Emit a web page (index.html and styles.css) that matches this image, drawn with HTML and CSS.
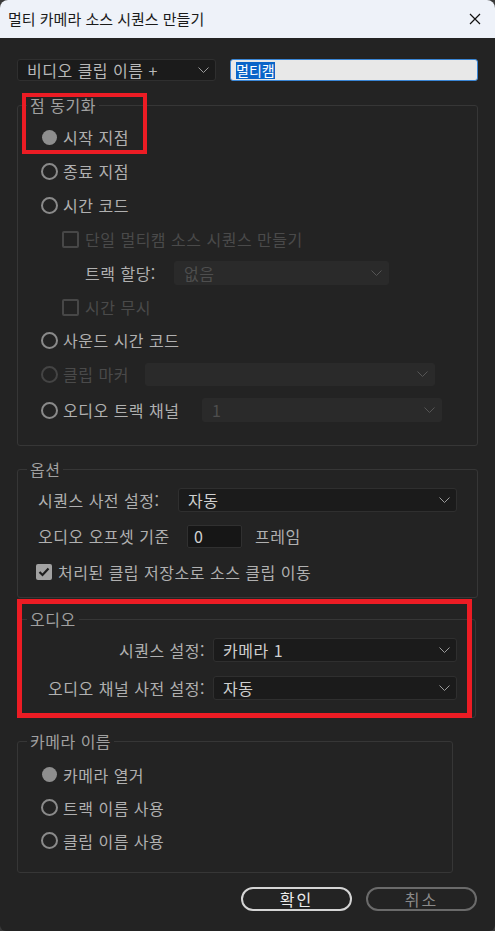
FILE: index.html
```html
<!DOCTYPE html>
<html lang="ko">
<head>
<meta charset="utf-8">
<title>멀티 카메라 소스 시퀀스 만들기</title>
<link rel="stylesheet" href="styles.css">
</head>
<body>
<div class="window">
  <header class="titlebar">
    <span class="title">멀티 카메라 소스 시퀀스 만들기</span>
    <svg class="close" width="12" height="12" viewBox="0 0 12 12"><path d="M1 1L11 11M11 1L1 11" stroke="#111" stroke-width="1.2" fill="none"/></svg>
  </header>
  <main class="content">
    <div class="name-row">
      <div class="select select-name"><span class="val">비디오 클립 이름 +</span><svg class="chev" width="11" height="6" viewBox="0 0 11 6"><path d="M0.5 0.5L5.5 5.5L10.5 0.5" fill="none" stroke="#9b9b9b" stroke-width="1"/></svg></div>
      <div class="textfield"><span class="selected">멀티캠</span></div>
    </div>

    <fieldset class="group group-sync">
      <legend>점 동기화</legend>
      <div class="body">
        <div class="row"><span class="radio on"></span><span class="lbl">시작 지점</span></div>
        <div class="row"><span class="radio"></span><span class="lbl">종료 지점</span></div>
        <div class="row"><span class="radio"></span><span class="lbl">시간 코드</span></div>
        <div class="row sub"><span class="check off"></span><span class="lbl dim">단일 멀티캠 소스 시퀀스 만들기</span></div>
        <div class="row sub2"><span class="lbl w-track">트랙 할당:</span><div class="select disabled w-track-sel"><span class="val dim">없음</span><svg class="chev" width="11" height="6" viewBox="0 0 11 6"><path d="M0.5 0.5L5.5 5.5L10.5 0.5" fill="none" stroke="#555" stroke-width="1"/></svg></div></div>
        <div class="row sub"><span class="check off"></span><span class="lbl dim">시간 무시</span></div>
        <div class="row"><span class="radio"></span><span class="lbl">사운드 시간 코드</span></div>
        <div class="row"><span class="radio off"></span><span class="lbl dim w-marker">클립 마커</span><div class="select disabled w-marker-sel"><span class="val"></span><svg class="chev" width="11" height="6" viewBox="0 0 11 6"><path d="M0.5 0.5L5.5 5.5L10.5 0.5" fill="none" stroke="#555" stroke-width="1"/></svg></div></div>
        <div class="row"><span class="radio"></span><span class="lbl w-chan">오디오 트랙 채널</span><div class="select disabled w-chan-sel"><span class="val dim">1</span><svg class="chev" width="11" height="6" viewBox="0 0 11 6"><path d="M0.5 0.5L5.5 5.5L10.5 0.5" fill="none" stroke="#555" stroke-width="1"/></svg></div></div>
      </div>
    </fieldset>

    <fieldset class="group group-opt">
      <legend>옵션</legend>
      <div class="body">
        <div class="row"><span class="lbl w-preset">시퀀스 사전 설정:</span><div class="select w-preset-sel"><span class="val">자동</span><svg class="chev" width="11" height="6" viewBox="0 0 11 6"><path d="M0.5 0.5L5.5 5.5L10.5 0.5" fill="none" stroke="#9b9b9b" stroke-width="1"/></svg></div></div>
        <div class="row"><span class="lbl w-offset">오디오 오프셋 기준</span><div class="numfield">0</div><span class="lbl unit">프레임</span></div>
        <div class="row"><span class="check on"><svg width="12" height="10" viewBox="0 0 12 10"><path d="M1.5 5L4.5 8L10.5 1.5" fill="none" stroke="#1e1e1e" stroke-width="2.2"/></svg></span><span class="lbl">처리된 클립 저장소로 소스 클립 이동</span></div>
      </div>
    </fieldset>

    <fieldset class="group group-audio">
      <legend>오디오</legend>
      <div class="body">
        <div class="row"><span class="lbl rlabel">시퀀스 설정:</span><div class="select w-audio-sel"><span class="val">카메라 1</span><svg class="chev" width="11" height="6" viewBox="0 0 11 6"><path d="M0.5 0.5L5.5 5.5L10.5 0.5" fill="none" stroke="#9b9b9b" stroke-width="1"/></svg></div></div>
        <div class="row"><span class="lbl rlabel">오디오 채널 사전 설정:</span><div class="select w-audio-sel"><span class="val">자동</span><svg class="chev" width="11" height="6" viewBox="0 0 11 6"><path d="M0.5 0.5L5.5 5.5L10.5 0.5" fill="none" stroke="#9b9b9b" stroke-width="1"/></svg></div></div>
      </div>
    </fieldset>

    <fieldset class="group group-cam">
      <legend>카메라 이름</legend>
      <div class="body">
        <div class="row"><span class="radio on"></span><span class="lbl">카메라 열거</span></div>
        <div class="row"><span class="radio"></span><span class="lbl">트랙 이름 사용</span></div>
        <div class="row"><span class="radio"></span><span class="lbl">클립 이름 사용</span></div>
      </div>
    </fieldset>

    <div class="buttons">
      <button class="btn ok">확인</button>
      <button class="btn cancel">취소</button>
    </div>

    <div class="mark mark-sync"></div>
    <div class="mark mark-audio"></div>
  </main>
</div>
</body>
</html>
```

FILE: styles.css
```css
* { box-sizing: border-box; }
html, body { margin: 0; padding: 0; }
body {
  background: #3a3a3a;
  font-family: "Noto Sans CJK KR", "Noto Sans", sans-serif;
  font-size: 16px;
  color: #b0b0b0;
}
.window {
  width: 495px;
  height: 931px;
  background: #232323;
  border-radius: 8px 8px 6px 6px;
  overflow: hidden;
}
.titlebar {
  height: 38px;
  background: #eef2f9;
  display: flex;
  align-items: center;
  justify-content: space-between;
  padding: 0 14px 0 8px;
}
.title { font-size: 15px; color: #1a1a1a; line-height: 20px; }
.close { display: block; }

.content {
  position: relative;
  padding: 21px 17px 0 17px;
  display: flex;
  flex-direction: column;
  letter-spacing: 0.5px;
}
.name-row { display: flex; gap: 14px; height: 22px; }
.select {
  display: flex;
  align-items: center;
  justify-content: space-between;
  background: #1b1b1b;
  border: 1px solid #2f2f2f;
  border-radius: 3px;
  padding: 0 6px 0 9px;
  height: 24px;
}
.select .val { color: #cfcfcf; line-height: 20px; white-space: nowrap; }
.select.disabled { background: #2a2a2a; border-color: #2a2a2a; }
.select .val.dim { color: #4e4e4e; }
.chev { display: block; flex: none; }
.select-name { width: 199px; height: 22px; }
.select-name .val { color: #b8b8b8; }
.textfield {
  flex: 1;
  height: 22px;
  background: #e8e8e8;
  border: 1.5px solid #3a86d6;
  border-radius: 3px;
  padding: 0 5px;
  display: flex;
  align-items: center;
}
.selected {
  background: #0a64c8;
  color: #fff;
  font-size: 14px;
  letter-spacing: 0;
  line-height: 17px;
}

.group {
  margin: 14px 0 0 0;
  padding: 0;
  border: 1px solid #363636;
  border-radius: 3px;
  min-width: 0;
}
.group legend {
  margin-left: 9px;
  padding: 0 3px;
  line-height: 20px;
  color: #a0a0a0;
}
.group .body { display: flex; flex-direction: column; }
.group-sync .body { padding: 5px 20px 17px 23px; }
.group-sync .row { height: 34px; }
.group-sync .row:nth-child(7) { height: 32px; }
.group-sync .row:nth-child(8), .group-sync .row:nth-child(9) { height: 36px; }
.group-opt { margin-top: 13px; }
.group-opt .body { padding: 4px 20px 8px 20px; gap: 2px; }
.group-opt .row { height: 34px; }
.group-audio { margin: 11px 2px 0 0; }
.group-audio .body { padding: 4px 18px 12px 20px; gap: 4px; }
.group-audio .row { height: 34px; }
.group-cam { margin: 13px 25px 0 0; }
.group-cam .body { padding: 7px 20px 15px 23px; }
.group-cam .row { height: 33px; }

.row { display: flex; align-items: center; }
.lbl { line-height: 20px; white-space: nowrap; color: #b0b0b0; }
.lbl.dim { color: #4a4a4a; }

.radio {
  width: 17px;
  height: 17px;
  border: 2.5px solid #8a8a8a;
  border-radius: 50%;
  margin-right: 5px;
  flex: none;
}
.radio.on { border: none; background: #8e8e8e; width: 15px; height: 15px; margin: 0 6px 0 1px; }
.radio.off { border-color: #444; }

.check {
  width: 17px;
  height: 17px;
  border-radius: 2px;
  margin-right: 6px;
  flex: none;
  display: flex;
  align-items: center;
  justify-content: center;
}
.check.off { border: 2.5px solid #474747; }
.check.on { background: #a2a2a2; width: 16px; height: 16px; }
.group-opt .check.on { margin-left: -2px; }
.sub { padding-left: 21px; }
.sub2 { padding-left: 44px; }

.w-track { width: 89px; }
.w-track-sel { width: 215px; }
.w-marker { width: 82px; }
.w-marker-sel { width: 290px; height: 23px; }
.w-chan { width: 139px; }
.w-chan-sel { width: 240px; }

.w-preset { width: 140px; }
.w-preset-sel { width: 279px; }
.w-offset { width: 149px; }
.numfield {
  width: 55px;
  height: 23px;
  background: #161616;
  border: 1px solid #303030;
  border-radius: 2px;
  color: #d0d0d0;
  line-height: 21px;
  padding-left: 6px;
}
.unit { margin-left: 13px; }

.rlabel { width: 175px; text-align: right; padding-right: 8px; }
.w-audio-sel { width: 244px; }

.buttons {
  display: flex;
  justify-content: flex-end;
  gap: 14px;
  margin-top: 14px;
  padding-right: 1px;
}
.btn {
  width: 111px;
  height: 24px;
  background: transparent;
  border: 2px solid #d4d4d4;
  border-radius: 12px;
  font-family: inherit;
  font-size: 16px;
  letter-spacing: 2px;
  line-height: 18px;
  color: #ececec;
  padding: 0;
}
.btn.cancel { border-color: #6a6a6a; color: #8a8a8a; }

.mark {
  position: absolute;
  border: 4px solid #ec1c24;
  pointer-events: none;
}
.mark-sync { left: 22px; top: 55px; width: 125px; height: 61px; }
.mark-audio { left: 17px; top: 561px; width: 455px; height: 119px; border-width: 5px; }
```
